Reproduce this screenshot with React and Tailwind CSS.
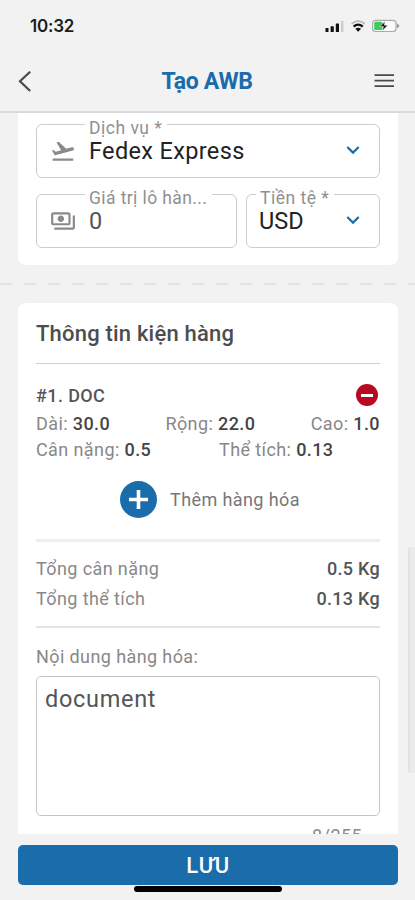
import { MdFlightTakeoff, MdOutlinePayments } from 'react-icons/md'

const DIMENSIONS = [
  { label: 'Dài', value: '30.0' },
  { label: 'Rộng', value: '22.0' },
  { label: 'Cao', value: '1.0' },
]

const TOTALS = [
  { label: 'Tổng cân nặng', value: '0.5 Kg' },
  { label: 'Tổng thể tích', value: '0.13 Kg' },
]

function StatusBar() {
  return (
    <div className="flex h-[52px] items-center justify-between pr-[14px] pl-[30px]">
      <span className="font-['Inter'] text-[17px] leading-none font-semibold tracking-[-0.2px] text-[#1c1c1c]">10:32</span>
      <svg width="76" height="16" viewBox="0 0 76 16">
        {/* signal */}
        <g fill="#111">
          <rect x="0.5" y="10" width="3" height="4" rx="0.6" />
          <rect x="5.6" y="8.2" width="3.2" height="5.8" rx="0.6" />
          <rect x="10.8" y="5.4" width="3.2" height="8.6" rx="0.6" />
          <rect x="16" y="2.8" width="2.4" height="11.2" rx="0.6" fill="#ccc" />
        </g>
        {/* wifi */}
        <g fill="none">
          <path d="M26.6 5.9 Q33.2 0.2 39.8 5.9" stroke="#b5b5b5" strokeWidth="1.5" />
          <path d="M28.6 8.6 Q33.2 4.6 37.8 8.6" stroke="#111" strokeWidth="2.3" />
        </g>
        <path d="M30.3 10.8 Q33.2 8.6 36.1 10.8 L33.2 13.8 Z" fill="#111" />
        {/* battery */}
        <rect x="47.6" y="2.3" width="23.4" height="11.2" rx="3" fill="#fafafa" stroke="#aaa" strokeWidth="1.2" />
        <rect x="49.2" y="3.8" width="8.5" height="8.2" rx="1.5" fill="#3ccb5a" />
        <path d="M72.4 5.9 L74 7.9 L72.4 9.9 Z" fill="#999" stroke="#999" />
        <path d="M60 3.4 L55 8.6 H58.4 L57.6 12.6 L62.8 7.2 H59.4 Z" fill="#111" stroke="#fafafa" strokeWidth="0.5" />
      </svg>
    </div>
  )
}

function Header() {
  return (
    <div className="flex h-[59px] items-center justify-between pr-[20px] pl-[18px]">
      <svg width="14" height="22" viewBox="0 0 14 22" fill="none" stroke="#4a4a4a" strokeWidth="2.2">
        <path d="M12.2 0.7 L2 10.3 L12.2 20" />
      </svg>
      <h1 className="ml-[8px] text-[23px] leading-none font-bold tracking-[-0.3px] text-[#1a6cab]">Tạo AWB</h1>
      <svg width="21" height="16" viewBox="0 0 21 16" fill="none" stroke="#4a4a4a" strokeWidth="1.8">
        <path d="M0.5 1.2 H20 M0.5 6.7 H20 M0.5 12.2 H20" />
      </svg>
    </div>
  )
}

function Chevron() {
  return (
    <svg width="14" height="10" viewBox="0 0 14 10" fill="none" stroke="#1a6cab" strokeWidth="2.2">
      <path d="M1.3 1 L7 6.6 L12.7 1" />
    </svg>
  )
}

function Field({ label, labelClass, value, valueClass, icon: Icon, select, className = '' }) {
  return (
    <div className={`relative flex h-[54px] items-center rounded-[6px] border border-[#cdcdcd] ${className}`}>
      <span className={`absolute -top-[7px] bg-white pr-[5px] pl-[4px] text-[17.5px] leading-[20px] whitespace-nowrap text-[#909090] ${labelClass}`}>
        {label}
      </span>
      {Icon && <Icon className="mr-[13px] ml-[13px] size-[26px] text-[#8a8a8a]" />}
      <span className={`flex-1 text-[23.5px] leading-[24px] ${valueClass}`}>{value}</span>
      {select && <div className="mr-[19px]"><Chevron /></div>}
    </div>
  )
}

function Pair({ label, value }) {
  return (
    <span>
      {label}: <b className="font-medium text-[#454545]">{value}</b>
    </span>
  )
}

function ShipmentCard() {
  return (
    <div className="h-[152px] rounded-b-[8px] bg-white px-[18px] pt-[11px]">
      <Field
        label="Dịch vụ *" labelClass="left-[48px] tracking-[0.5px]"
        value="Fedex Express" valueClass="tracking-[0.35px] text-[#222]"
        icon={MdFlightTakeoff} select
      />
      <div className="mt-[16px] flex gap-[9px]">
        <Field
          className="w-[201px]"
          label="Giá trị lô hàn..." labelClass="left-[48px] tracking-[0.4px]"
          value="0" valueClass="text-[#555]" icon={MdOutlinePayments}
        />
        <Field
          className="flex-1"
          label="Tiền tệ *" labelClass="left-[9px] tracking-[0.5px]"
          value="USD" valueClass="pl-[12px] text-[#222]" select
        />
      </div>
    </div>
  )
}

function PackageCard() {
  return (
    <div className="h-[560px] rounded-[8px] bg-white px-[18px] pt-[17px] text-[18px] tracking-[0.4px] text-[#888]">
      <h2 className="text-[22px] leading-[28px] font-medium tracking-[0.2px] text-[#4d4d4d]">Thông tin kiện hàng</h2>
      <div className="mt-[15px] h-px bg-[#cfcfcf]" />

      <div className="mt-[19px] flex h-[24px] items-center justify-between">
        <span className="font-medium text-[#555]">#1. DOC</span>
        <span className="mr-[2px] flex size-[22px] items-center justify-center rounded-full bg-[#b90822]">
          <span className="h-[3px] w-[12px] bg-white" />
        </span>
      </div>
      <div className="mt-[3px] flex h-[26px] items-center justify-between">
        {DIMENSIONS.map((d) => <Pair key={d.label} {...d} />)}
      </div>
      <div className="flex h-[26px] items-center">
        <div className="w-[183px]"><Pair label="Cân nặng" value="0.5" /></div>
        <Pair label="Thể tích" value="0.13" />
      </div>

      <div className="mt-[18px] ml-[84px] flex h-[38px] items-center gap-[13px]">
        <span className="flex size-[37px] items-center justify-center rounded-full bg-[#1a6cab]">
          <svg width="19" height="19" viewBox="0 0 19 19" stroke="#fff" strokeWidth="3.6">
            <path d="M0 9.5 H19 M9.5 0 V19" />
          </svg>
        </span>
        <span className="text-[#777]">Thêm hàng hóa</span>
      </div>

      <div className="mt-[21px] h-[3px] bg-[#efefef]" />
      <div className="mt-[11px]">
        {TOTALS.map((t) => (
          <div key={t.label} className="flex h-[30px] items-center justify-between">
            <span>{t.label}</span>
            <span className="font-medium tracking-[0.3px] text-[#555]">{t.value}</span>
          </div>
        ))}
      </div>
      <div className="mt-[13px] h-[2px] bg-[#e4e4e4]" />

      <p className="mt-[17px] leading-[24px]">Nội dung hàng hóa:</p>
      <div className="mt-[7px] h-[140px] rounded-[5px] border border-[#c4c4c4] px-[8px] pt-[8px] text-[23.5px] leading-[28px] tracking-[0.7px] text-[#555]">
        document
      </div>
      <p className="mt-[8px] pr-[18px] text-right leading-[24px]">8/255</p>
    </div>
  )
}

export default function App() {
  return (
    <div className="flex h-[900px] w-[415px] flex-col overflow-hidden bg-[#f2f2f2] font-['Roboto',sans-serif]">
      <StatusBar />
      <Header />
      <div className="h-[2px] bg-[#d9d9d9]" />
      <div className="relative h-[721px] overflow-hidden pr-[17px] pl-[18px]">
        <ShipmentCard />
        <svg className="-ml-[18px] my-[18px] block max-w-none" width="415" height="2">
          <path d="M0 1 H415" stroke="#dedede" strokeWidth="1.5" strokeDasharray="12 12" />
        </svg>
        <PackageCard />
        {/* scroll thumb */}
        <div className="absolute top-[434px] right-0 h-[226px] w-[7px] rounded-l-[3px] border-l-2 border-[#e2e2e2] bg-[#ebebeb]" />
      </div>
      <button className="mr-[17px] ml-[18px] mt-[11px] h-[40px] shrink-0 rounded-[5px] bg-[#1a6cab] pt-[2px] text-[22px] leading-none font-medium tracking-[0.5px] text-white">
        LƯU
      </button>
      <div className="mx-auto mt-px h-[6px] w-[148px] shrink-0 rounded-full bg-black" />
    </div>
  )
}
